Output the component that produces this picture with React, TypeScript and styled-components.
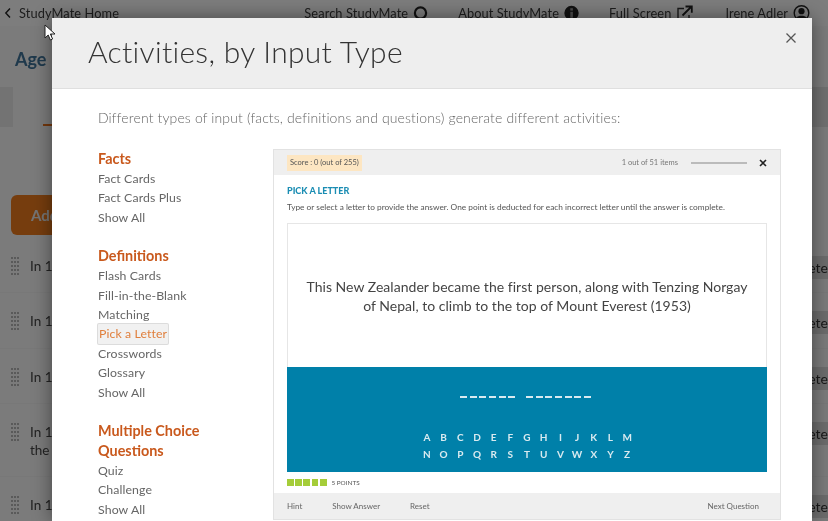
import React from "react";
import styled, { createGlobalStyle } from "styled-components";

const Global = createGlobalStyle`
  html, body { margin: 0; padding: 0; background: #7a7a7a; }
  * { box-sizing: border-box; }
`;

const Page = styled.div`
  position: relative;
  width: 828px;
  height: 521px;
  overflow: hidden;
  background: #f6f6f6;
  font-family: Lato, "Open Sans", sans-serif;
  filter: blur(0.5px);
`;

const TopNav = styled.nav`
  display: flex;
  align-items: center;
  height: 26px;
  padding: 0 18px 0 4px;
  background: #fafafa;
  color: #3c3c3c;
  font-size: 12.8px;
  letter-spacing: 0.1px;
`;

const Back = styled.a`
  display: flex;
  align-items: center;
  gap: 7px;
`;

const NavLinks = styled.div`
  display: flex;
  align-items: center;
  gap: 30px;
  margin-left: auto;
`;

const NavLink = styled.a`
  display: flex;
  align-items: center;
  gap: 5px;
`;

const CourseTitle = styled.h1`
  margin: 21px 0 0 15px;
  font-size: 18px;
  line-height: 24px;
  font-weight: 700;
  color: #3f7398;
`;

const TabBand = styled.div`
  display: flex;
  height: 40px;
  margin-top: 16px;
`;

const TabFirst = styled.div`
  width: 13px;
  background: #e6e6e6;
`;

const TabMark = styled.div`
  width: 12px;
  height: 2px;
  margin: 37px 0 0 30px;
  background: #e8701a;
`;

const TabLast = styled.div`
  width: 40px;
  margin-left: auto;
  background: #e0e0e0;
`;

const AddButton = styled.button`
  display: block;
  width: 130px;
  height: 40px;
  margin: 68px 0 0 11px;
  border: 0;
  border-radius: 6px;
  padding: 0 0 0 20px;
  background: #ec7a1c;
  color: #e8e8e8;
  font: 700 15px Lato, sans-serif;
  text-align: left;
`;

const Rows = styled.div`
  margin-top: 3px;
`;

const Row = styled.div<{ $tall?: boolean }>`
  display: flex;
  align-items: flex-start;
  height: ${(p) => (p.$tall ? 73 : 55.3)}px;
  padding: 18px 0 0 11px;
  border-bottom: 1px solid #f0f0f0;
  color: #444;
`;

const RowText = styled.div`
  flex: 1;
  margin: 1px 0 0 12px;
  font-size: 13.5px;
  line-height: 18px;
`;

const Handle = styled.div`
  display: grid;
  grid-template-columns: 2px 2px 2px;
  grid-auto-rows: 2px;
  gap: 2px 1px;
  width: 7px;
  margin-top: 1px;
  & > i {
    background: #b4b4b4;
  }
`;

const DeleteChip = styled.div`
  width: 60px;
  height: 23px;
  background: #d8d8d8;
  color: #333;
  font-size: 14px;
  line-height: 23px;
  text-align: right;
`;

const Backdrop = styled.div`
  position: absolute;
  inset: 0;
  background: rgba(0, 0, 0, 0.5);
`;

const Modal = styled.section`
  position: absolute;
  top: 18px;
  left: 52px;
  bottom: 0;
  width: 760px;
  overflow: hidden;
  display: flex;
  flex-direction: column;
  background: #fff;
  box-shadow: 0 0 18px rgba(0, 0, 0, 0.45);
`;

const ModalHeader = styled.header`
  display: flex;
  align-items: flex-start;
  justify-content: space-between;
  flex: none;
  height: 71px;
  padding: 14px 14px 0 36px;
  background: #eeeeee;
  border-bottom: 1px solid #dfdfdf;
`;

const ModalTitle = styled.h2`
  margin: 0;
  font-size: 30px;
  line-height: 38px;
  font-weight: 300;
  letter-spacing: 0.3px;
  color: #333;
`;

const CloseButton = styled.span`
  display: flex;
  margin-top: -1px;
  color: #555;
`;

const ModalBody = styled.div`
  flex: 1;
  min-height: 0;
  padding: 20px 31px 0 46px;
`;

const Intro = styled.p`
  margin: 0;
  font-size: 14px;
  line-height: 18px;
  font-weight: 300;
  letter-spacing: 0.13px;
  color: #666;
`;

const Columns = styled.div`
  display: grid;
  grid-template-columns: 175px 508px;
  margin-top: 22px;
`;

const SideNav = styled.div`
  display: flex;
  flex-direction: column;
  align-items: flex-start;
`;

const GroupTitle = styled.h3`
  margin: 0;
  font-size: 14.4px;
  line-height: 20px;
  font-weight: 700;
  color: #c9591d;
`;

const Group = styled.div`
  display: flex;
  flex-direction: column;
  align-items: flex-start;
  margin-bottom: 19px;
`;

const NavItem = styled.a<{ $active?: boolean }>`
  display: block;
  font-size: 12.3px;
  line-height: 19.4px;
  letter-spacing: 0.1px;
  color: ${(p) => (p.$active ? "#e07f3c" : "#666")};
  ${(p) =>
    p.$active &&
    `background:#f1f1f1; box-shadow:0 0 0 1px #dcdcdc; padding:0 1px; border-radius:1px;`}
`;

const Preview = styled.div`
  display: flex;
  flex-direction: column;
  height: 371px;
  border: 1px solid #e2e2e2;
`;

const PreviewTop = styled.div`
  display: flex;
  align-items: center;
  flex: none;
  height: 25px;
  padding: 0 13px 0 13px;
  background: #efefef;
  font-size: 7.5px;
  color: #777;
`;

const Score = styled.div`
  height: 16px;
  padding: 0 3px;
  background: #fde6c2;
  color: #555;
  line-height: 16px;
`;

const Count = styled.span`
  margin-left: auto;
`;

const ProgressTrack = styled.div`
  width: 56px;
  height: 2px;
  margin: 0 12px 0 13px;
  background: #bbb;
`;

const PreviewClose = styled.span`
  display: flex;
  color: #222;
`;

const PreviewMain = styled.div`
  flex: 1;
  min-height: 0;
  padding: 10px 13px 0;
`;

const ActivityName = styled.h4`
  margin: 0;
  font-size: 9px;
  line-height: 11px;
  font-weight: 900;
  color: #1b8db3;
`;

const Instruction = styled.p`
  margin: 6px 0 0;
  font-size: 8.3px;
  line-height: 11px;
  color: #555;
`;

const QuestionBox = styled.div`
  display: flex;
  align-items: flex-start;
  justify-content: center;
  height: 144px;
  margin-top: 10px;
  padding-top: 53px;
  border: 1px solid #e6e6e6;
  border-bottom: 0;
  font-size: 14px;
  line-height: 19px;
  letter-spacing: 0.03px;
  color: #444;
  text-align: center;
`;

const BluePanel = styled.div`
  display: flex;
  flex-direction: column;
  align-items: center;
  height: 105px;
  padding-top: 29px;
  background: #0080a9;
  color: #d9eaf0;
`;

const Blanks = styled.div`
  display: flex;
  gap: 11px;
  height: 4px;
  margin-left: -3px;
`;

const BlankWord = styled.div`
  display: flex;
  gap: 2.6px;
`;

const Blank = styled.i`
  display: block;
  width: 7px;
  height: 1.5px;
  background: #d9eaf0;
`;

const Keys = styled.div`
  display: grid;
  grid-template-columns: repeat(13, 16.7px);
  grid-auto-rows: 17px;
  margin: 29px 0 0 0;
  font-size: 10px;
  font-weight: 700;
  line-height: 17px;
  text-align: center;
`;

const PointsRow = styled.div`
  display: flex;
  align-items: center;
  gap: 1.4px;
  height: 21px;
  font-size: 6.4px;
  color: #555;
`;

const PointSquare = styled.i`
  display: block;
  width: 6.8px;
  height: 6.8px;
  background: #a5cd39;
`;

const PointsLabel = styled.span`
  margin-left: 3.5px;
`;

const PreviewBottom = styled.div`
  display: flex;
  align-items: center;
  flex: none;
  height: 26px;
  padding: 0 21px 0 13px;
  background: #efefef;
  font-size: 8px;
  color: #666;
`;

const Action = styled.span<{ $gap: number; $push?: boolean }>`
  margin-left: ${(p) => (p.$push ? "auto" : `${p.$gap}px`)};
`;

const Cursor = styled.svg`
  position: absolute;
  left: 44px;
  top: 24px;
`;

const Icon = ({ children, w = 15 }: { children: React.ReactNode; w?: number }) => (
  <svg width={w} height={16} viewBox={`0 0 ${w} 16`} style={{ display: "block" }}>
    {children}
  </svg>
);

const letters = "ABCDEFGHIJKLMNOPQRSTUVWXYZ".split("");

const groups = [
  { title: ["Facts"], items: ["Fact Cards", "Fact Cards Plus", "Show All"] },
  {
    title: ["Definitions"],
    items: ["Flash Cards", "Fill-in-the-Blank", "Matching", "Pick a Letter", "Crosswords", "Glossary", "Show All"],
  },
  { title: ["Multiple Choice", "Questions"], items: ["Quiz", "Challenge", "Show All"] },
];

export default function App() {
  return (
    <Page>
      <Global />
      <TopNav>
        <Back>
          <svg width="8" height="12" viewBox="0 0 8 12">
            <path d="M6 1.5 1.8 6 6 10.5" fill="none" stroke="#222" strokeWidth="1.4" />
          </svg>
          StudyMate Home
        </Back>
        <NavLinks>
          <NavLink>
            Search StudyMate
            <Icon w={15}>
              <circle cx="7.5" cy="8" r="5.6" fill="none" stroke="#222" strokeWidth="2.2" />
            </Icon>
          </NavLink>
          <NavLink>
            About StudyMate
            <Icon w={15}>
              <circle cx="7.5" cy="8" r="7.2" fill="#222" />
              <rect x="6.3" y="6.8" width="2.6" height="6" fill="#999" />
              <rect x="6.3" y="3.2" width="2.6" height="2.4" fill="#999" />
            </Icon>
          </NavLink>
          <NavLink>
            Full Screen
            <Icon w={19}>
              <path d="M8 3.5H2v11h11V10" fill="none" stroke="#333" strokeWidth="1.4" />
              <path d="M6.5 10.5 15 2M9.5 1.5h6.3v6.3" fill="none" stroke="#222" strokeWidth="1.8" />
            </Icon>
          </NavLink>
          <NavLink>
            Irene Adler
            <Icon w={17}>
              <circle cx="8.5" cy="8" r="7.3" fill="none" stroke="#222" strokeWidth="1.4" />
              <circle cx="8.5" cy="6.2" r="3.1" fill="#222" />
              <path d="M3.6 12.6c1-2.6 8.8-2.6 9.8 0-2.4 2.3-7.4 2.3-9.8 0Z" fill="#222" />
            </Icon>
          </NavLink>
        </NavLinks>
      </TopNav>
      <CourseTitle>Age</CourseTitle>
      <TabBand>
        <TabFirst />
        <TabMark />
        <TabLast />
      </TabBand>
      <AddButton>Add</AddButton>
      <Rows>
        {[0, 1, 2, 3, 4].map((i) => (
          <Row key={i} $tall={i === 3}>
            <Handle>
              {Array.from({ length: 15 }).map((_, k) => (
                <i key={k} />
              ))}
            </Handle>
            <RowText>
              In 1953
              {i === 3 && (
                <>
                  <br />
                  the
                </>
              )}
            </RowText>
            <DeleteChip>Delete</DeleteChip>
          </Row>
        ))}
      </Rows>
      <Backdrop />
      <Modal>
        <ModalHeader>
          <ModalTitle>Activities, by Input Type</ModalTitle>
          <CloseButton>
            <svg width="14" height="14" viewBox="0 0 14 14">
              <path d="M2.5 2.5 11.5 11.5M11.5 2.5 2.5 11.5" stroke="currentColor" strokeWidth="1.3" />
            </svg>
          </CloseButton>
        </ModalHeader>
        <ModalBody>
          <Intro>Different types of input (facts, definitions and questions) generate different activities:</Intro>
          <Columns>
            <SideNav>
              {groups.map((g) => (
                <Group key={g.title[0]}>
                  {g.title.map((t) => (
                    <GroupTitle key={t}>{t}</GroupTitle>
                  ))}
                  {g.items.map((it) => (
                    <NavItem key={it} $active={it === "Pick a Letter"}>
                      {it}
                    </NavItem>
                  ))}
                </Group>
              ))}
            </SideNav>
            <Preview>
              <PreviewTop>
                <Score>Score : 0 (out of 255)</Score>
                <Count>1 out of 51 items</Count>
                <ProgressTrack />
                <PreviewClose>
                  <svg width="8" height="8" viewBox="0 0 8 8">
                    <path d="M1 1 7 7M7 1 1 7" stroke="currentColor" strokeWidth="1.6" />
                  </svg>
                </PreviewClose>
              </PreviewTop>
              <PreviewMain>
                <ActivityName>PICK A LETTER</ActivityName>
                <Instruction>
                  Type or select a letter to provide the answer. One point is deducted for each incorrect letter until
                  the answer is complete.
                </Instruction>
                <QuestionBox>
                  <div>
                    This New Zealander became the first person, along with Tenzing Norgay
                    <br />
                    of Nepal, to climb to the top of Mount Everest (1953)
                  </div>
                </QuestionBox>
                <BluePanel>
                  <Blanks>
                    {[6, 7].map((n) => (
                      <BlankWord key={n}>
                        {Array.from({ length: n }).map((_, k) => (
                          <Blank key={k} />
                        ))}
                      </BlankWord>
                    ))}
                  </Blanks>
                  <Keys>
                    {letters.map((l) => (
                      <span key={l}>{l}</span>
                    ))}
                  </Keys>
                </BluePanel>
                <PointsRow>
                  {[0, 1, 2, 3, 4].map((i) => (
                    <PointSquare key={i} />
                  ))}
                  <PointsLabel>5 POINTS</PointsLabel>
                </PointsRow>
              </PreviewMain>
              <PreviewBottom>
                <Action $gap={0}>Hint</Action>
                <Action $gap={30}>Show Answer</Action>
                <Action $gap={30}>Reset</Action>
                <Action $gap={0} $push>
                  Next Question
                </Action>
              </PreviewBottom>
            </Preview>
          </Columns>
        </ModalBody>
      </Modal>
      <Cursor width="13" height="18" viewBox="0 0 13 18">
        <path d="M1 1v13l3.2-3 2.2 5 2.2-1-2.2-5H11Z" fill="#fff" stroke="#222" strokeWidth="1" />
      </Cursor>
    </Page>
  );
}
